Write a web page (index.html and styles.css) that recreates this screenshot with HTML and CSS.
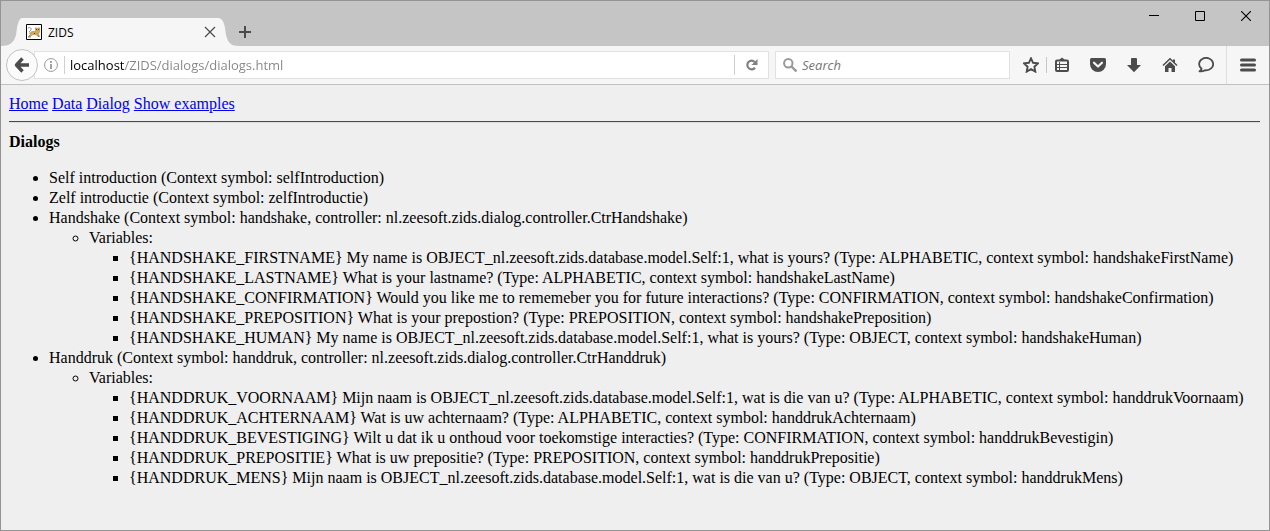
FILE: index.html
```html
<!DOCTYPE html>
<html lang="en">
<head>
<meta charset="utf-8">
<title>ZIDS</title>
<link rel="stylesheet" href="styles.css">
</head>
<body>
<div class="window">
  <header class="titlebar">
    <div class="tab">
      <svg class="tab-edge" width="21" height="28" viewBox="0 0 21 28" aria-hidden="true"><path d="M0 28C8 28 13 25 15 17L16 10C17 4 19 0 21 0V28Z"/></svg>
      <div class="tab-body">
        <svg class="favicon" width="16" height="16" viewBox="0 0 16 16" aria-hidden="true">
          <path d="M.5.5h15v15H.5z" fill="#fff" stroke="#000"/>
          <path d="M3 9l3-2 3 0V4l1-1 1 1h1l1-1 1 1v4l-1 2 1 3h-2l-2-2-3 0-3 2H2l2-2z" fill="#cba765"/>
          <path d="M2 4c2-1 4 0 3 2L3 8M4 11l-2 2h3M12 11l1 2" fill="none" stroke="#777" stroke-width=".8"/>
          <path d="M10 5h1v1h-1zM12 5h1v1h-1zM8 9h1v1H8z" fill="#5b4523"/>
        </svg>
        <span class="tab-title">ZIDS</span>
        <button class="plain tab-close" aria-label="Close tab"><svg width="12" height="12" viewBox="0 0 12 12"><path d="M1 1l10 10M11 1L1 11" stroke="#4c4c4c" stroke-width="1.2"/></svg></button>
      </div>
      <svg class="tab-edge" width="21" height="28" viewBox="0 0 21 28" aria-hidden="true"><path d="M21 28C13 28 10 25 8 17L7 10C6 4 4 0 0 0V28Z"/></svg>
    </div>
    <button class="plain new-tab" aria-label="New tab"><svg width="12" height="12" viewBox="0 0 12 12"><path d="M6 0v12M0 6h12" stroke="#4c4c4c" stroke-width="2"/></svg></button>
    <div class="window-controls">
      <button class="plain" aria-label="Minimize"><svg width="10" height="10" viewBox="0 0 10 10"><path d="M0 4.5h10" stroke="#000"/></svg></button>
      <button class="plain" aria-label="Maximize"><svg width="10" height="10" viewBox="0 0 10 10"><path d="M.5.5h9v9h-9z" fill="none" stroke="#000"/></svg></button>
      <button class="plain" aria-label="Close"><svg width="10" height="10" viewBox="0 0 10 10"><path d="M0 0l10 10M10 0L0 10" stroke="#000" stroke-width="1.1"/></svg></button>
    </div>
  </header>

  <div class="toolbar">
    <button class="plain back" aria-label="Back"><svg width="16" height="16" viewBox="0 0 16 16"><path d="M8.500 1.500L2.500 8l6 6.500M3 8h12" fill="none" stroke="#4c4c4c" stroke-width="3.400" stroke-linejoin="round"/></svg></button>
    <div class="field address">
      <button class="plain info" aria-label="Site information"><svg width="14" height="14" viewBox="0 0 14 14"><circle cx="7" cy="7" r="6.400" fill="none" stroke="#999"/><path d="M7 6v5M7 3v2" stroke="#8c8c8c" stroke-width="1.600"/></svg></button>
      <input class="url" type="text" aria-label="Address" value="localhost/ZIDS/dialogs/dialogs.html">
      <button class="plain reload" aria-label="Reload"><svg width="12" height="12" viewBox="0 0 12 12"><path d="M9 8.700A4.300 4.300 0 1 1 8.700 3" fill="none" stroke="#808080" stroke-width="2.200"/><path d="M11.500 0v6h-6z" fill="#808080"/></svg></button>
    </div>
    <div class="field search">
      <svg width="14" height="14" viewBox="0 0 14 14" aria-hidden="true"><circle cx="5.300" cy="5.300" r="4.200" fill="none" stroke="#999" stroke-width="2"/><path d="M8.500 8.500l5 5" stroke="#999" stroke-width="2.400"/></svg>
      <input class="query" type="text" aria-label="Search" placeholder="Search">
    </div>
    <div class="actions">
      <button class="plain star" aria-label="Bookmark this page"><svg width="16" height="16" viewBox="0 0 16 16"><path d="M8 1.300l2.100 4.500 4.900.6-3.600 3.300.9 4.900L8 12.200l-4.300 2.400.9-4.900L1 6.400l4.900-.6z" fill="none" stroke="#4c4c4c" stroke-width="1.900"/></svg></button>
      <button class="plain bookmarks" aria-label="Bookmarks"><svg width="16" height="16" viewBox="0 0 16 16"><path d="M5 3L8 .5 11 3" fill="#4c4c4c"/><rect x="2" y="3.500" width="12" height="10.500" rx="1" fill="none" stroke="#4c4c4c" stroke-width="2"/><path d="M3 7.500h10M3 10.500h10M5.500 5v8" stroke="#4c4c4c" stroke-width="1"/></svg></button>
      <button class="plain" aria-label="Save to Pocket"><svg width="16" height="16" viewBox="0 0 16 16"><path d="M1.500 1h13Q16 1 16 2.500V7a8 8 0 0 1-16 0V2.500Q0 1 1.500 1z" fill="#4c4c4c"/><path d="M4 5.700l4 3.800 4-3.800" fill="none" stroke="#f6f6f6" stroke-width="2.200" stroke-linecap="round" stroke-linejoin="round"/></svg></button>
      <button class="plain" aria-label="Downloads"><svg width="16" height="16" viewBox="0 0 16 16"><path d="M5 2q0-1 1-1h4q1 0 1 1v6h4l-7 7.200L1 8h4z" fill="#4c4c4c"/></svg></button>
      <button class="plain" aria-label="Home"><svg width="16" height="16" viewBox="0 0 16 16"><path d="M1 8.500l7-6.700 7 6.700" fill="none" stroke="#4c4c4c" stroke-width="1.500"/><path d="M8 4.500l5 4.700V15H9.500v-4h-3v4H3V9.200zM11 2.500h2V6l-2-2z" fill="#4c4c4c"/></svg></button>
      <button class="plain" aria-label="Chat"><svg width="16" height="16" viewBox="0 0 16 16"><path d="M3.600 11.800A7 6.200 0 1 1 7 13.200Q4.500 14.800 1.500 14.300 3.200 13.300 3.600 11.800z" fill="none" stroke="#4c4c4c" stroke-width="1.800" stroke-linejoin="round"/></svg></button>
    </div>
    <button class="plain menu" aria-label="Open menu"><svg width="16" height="14" viewBox="0 0 16 14"><path d="M1.500 2h13M1.500 7h13M1.500 12h13" stroke="#4c4c4c" stroke-width="3" stroke-linecap="round"/></svg></button>
  </div>

  <main class="page">
    <nav><a href="#home">Home</a> <a href="#data">Data</a> <a href="#dialog">Dialog</a> <a href="#examples">Show examples</a></nav>
    <hr class="rule">
    <h1 class="heading">Dialogs</h1>
    <ul class="list">
      <li>Self introduction (Context symbol: selfIntroduction)</li>
      <li>Zelf introductie (Context symbol: zelfIntroductie)</li>
      <li>Handshake (Context symbol: handshake, controller: nl.zeesoft.zids.dialog.controller.CtrHandshake)
        <ul class="list">
          <li>Variables:
            <ul class="list">
              <li>{HANDSHAKE_FIRSTNAME} My name is OBJECT_nl.zeesoft.zids.database.model.Self:1, what is yours? (Type: ALPHABETIC, context symbol: handshakeFirstName)</li>
              <li>{HANDSHAKE_LASTNAME} What is your lastname? (Type: ALPHABETIC, context symbol: handshakeLastName)</li>
              <li>{HANDSHAKE_CONFIRMATION} Would you like me to rememeber you for future interactions? (Type: CONFIRMATION, context symbol: handshakeConfirmation)</li>
              <li>{HANDSHAKE_PREPOSITION} What is your prepostion? (Type: PREPOSITION, context symbol: handshakePreposition)</li>
              <li>{HANDSHAKE_HUMAN} My name is OBJECT_nl.zeesoft.zids.database.model.Self:1, what is yours? (Type: OBJECT, context symbol: handshakeHuman)</li>
            </ul>
          </li>
        </ul>
      </li>
      <li>Handdruk (Context symbol: handdruk, controller: nl.zeesoft.zids.dialog.controller.CtrHanddruk)
        <ul class="list">
          <li>Variables:
            <ul class="list">
              <li>{HANDDRUK_VOORNAAM} Mijn naam is OBJECT_nl.zeesoft.zids.database.model.Self:1, wat is die van u? (Type: ALPHABETIC, context symbol: handdrukVoornaam)</li>
              <li>{HANDDRUK_ACHTERNAAM} Wat is uw achternaam? (Type: ALPHABETIC, context symbol: handdrukAchternaam)</li>
              <li>{HANDDRUK_BEVESTIGING} Wilt u dat ik u onthoud voor toekomstige interacties? (Type: CONFIRMATION, context symbol: handdrukBevestigin)</li>
              <li>{HANDDRUK_PREPOSITIE} What is uw prepositie? (Type: PREPOSITION, context symbol: handdrukPrepositie)</li>
              <li>{HANDDRUK_MENS} Mijn naam is OBJECT_nl.zeesoft.zids.database.model.Self:1, wat is die van u? (Type: OBJECT, context symbol: handdrukMens)</li>
            </ul>
          </li>
        </ul>
      </li>
    </ul>
  </main>
</div>
</body>
</html>
```
FILE: styles.css
```css
* { box-sizing: border-box; }
body { margin: 0; }
svg { display: block; flex: none; }

.window {
  min-height: 100vh;
  display: flex;
  flex-direction: column;
  border: 1px solid #949494;
  background: #efefef;
  font-family: "Open Sans", "Noto Sans", sans-serif;
}
.plain {
  display: flex;
  align-items: center;
  justify-content: center;
  padding: 0;
  border: 0;
  background: none;
}

.titlebar {
  display: flex;
  height: 45px;
  background: #c5c5c5;
}
.tab {
  display: flex;
  align-self: flex-end;
  height: 28px;
}
.tab-edge { fill: #f6f6f6; }
.tab-body {
  display: flex;
  align-items: center;
  width: 196px;
  padding: 0 2px 0 4px;
  background: #f6f6f6;
  font-size: 12px;
}
.tab-title { flex: 1; padding-left: 6px; }
.new-tab {
  align-self: flex-end;
  width: 12px;
  height: 28px;
}
.window-controls {
  display: flex;
  margin-left: auto;
}
.window-controls .plain { width: 46px; height: 30px; }

.toolbar {
  display: flex;
  align-items: center;
  height: 39px;
  padding-left: 5px;
  background: #f6f6f6;
  border-bottom: 1px solid #c0c0c0;
}
.back {
  z-index: 1;
  width: 32px;
  height: 32px;
  border: 1px solid #c3c3c3;
  border-radius: 50%;
  background: #fbfbfb;
}
.field {
  display: flex;
  align-items: center;
  height: 28px;
  border: 1px solid #e1e1e1;
  background: #fff;
}
.field input {
  flex: 1;
  min-width: 0;
  height: 24px;
  padding: 0;
  border: 0;
  outline: 0;
  font: 13px "Open Sans", "Noto Sans", sans-serif;
}
.address { flex: 1; margin-left: -4px; }
.info {
  width: 30px;
  height: 18px;
  padding-left: 2px;
  border-right: 1px solid #d0d0d0;
}
.field .url {
  margin-left: 5px;
  background: linear-gradient(90deg, #000 55px, #858585 55px);
  -webkit-background-clip: text;
  background-clip: text;
  color: transparent;
}
.reload {
  width: 34px;
  height: 20px;
  border-left: 1px solid #d0d0d0;
}
.search {
  width: 235px;
  margin-left: 6px;
  padding-left: 7px;
}
.field .query { margin-left: 5px; font-style: italic; }
.query::placeholder { color: #757575; }
.actions { display: flex; padding: 0 2px 0 5px; }
.actions .plain { width: 36px; height: 16px; }
.actions .star { width: 32px; border-right: 1px solid #c8c8c8; }
.actions .bookmarks { width: 30px; margin-right: 3px; }
.menu {
  width: 43px;
  height: 38px;
  border-left: 1px solid #dedede;
}

.page {
  padding: 9px 9px 0 8px;
  font: 16px/20px "Liberation Serif", serif;
  color: #000;
}
.page a { color: #0000ee; }
.rule {
  height: 2px;
  margin: 7px 0 9px;
  border: 0;
  border-top: 1px solid #4a4a4a;
  border-bottom: 1px solid #dedede;
}
.heading {
  margin: 0 0 16px;
  font-size: 16px;
  line-height: 20px;
}
.list { margin: 0; padding-left: 40px; }
```
